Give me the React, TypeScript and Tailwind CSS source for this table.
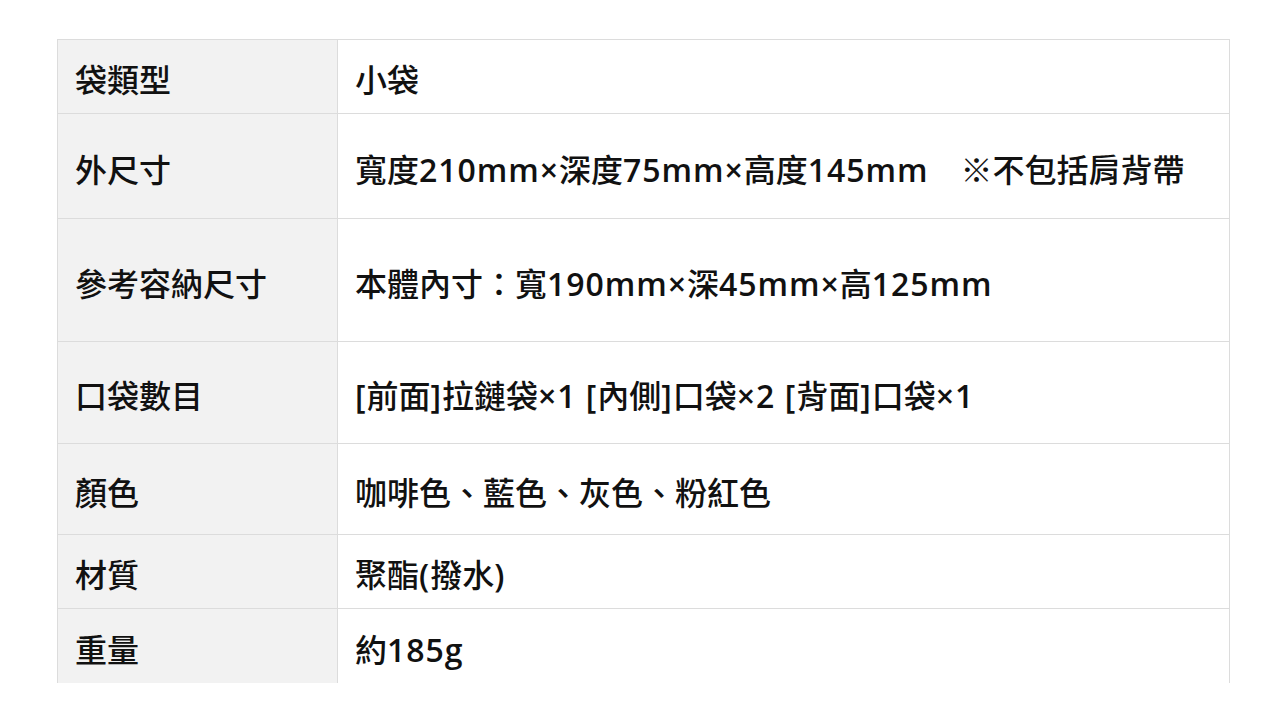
import React from 'react';

const rows: { label: string; value: string; h: string }[] = [
  { label: '袋類型', value: '小袋', h: 'h-[74px]' },
  { label: '外尺寸', value: '寬度210mm×深度75mm×高度145mm　※不包括肩背帶', h: 'h-[105px]' },
  { label: '參考容納尺寸', value: '本體內寸：寬190mm×深45mm×高125mm', h: 'h-[123px]' },
  { label: '口袋數目', value: '[前面]拉鏈袋×1 [內側]口袋×2 [背面]口袋×1', h: 'h-[102px]' },
  { label: '顏色', value: '咖啡色、藍色、灰色、粉紅色', h: 'h-[91px]' },
  { label: '材質', value: '聚酯(撥水)', h: 'h-[74px]' },
  { label: '重量', value: '約185g', h: 'h-[75px]' },
];

// latin runs are set a little looser and heavier than the CJK glyphs
const Mixed = ({ text }: { text: string }) => (
  <>
    {text.split(/([\x20-\x7e×]+)/).map((part, i) =>
      /^[\x20-\x7e×]+$/.test(part) ? (
        <span key={i} className="font-semibold tracking-[0.03em]">{part}</span>
      ) : (
        <span key={i}>{part}</span>
      )
    )}
  </>
);

export default function App() {
  return (
    <div
      className="w-[1280px] h-[720px] bg-white pt-[39px] pl-[57px] overflow-hidden"
      style={{ fontFamily: '"Open Sans", "Noto Sans CJK TC", sans-serif' }}
    >
      <div className="w-[1173px] border-x border-[#dcdcdc]">
        {rows.map((r) => (
          <div key={r.label} className={`flex border-t border-[#dcdcdc] ${r.h}`}>
            <div className="w-[280px] shrink-0 bg-[#f2f2f2] border-r border-[#dcdcdc] flex items-center pl-[17px] pt-[7px] text-[32px] font-medium text-[#111]">
              {r.label}
            </div>
            <div className="flex-1 flex items-center pl-[17px] pt-[7px] text-[32px] font-medium text-[#111] whitespace-pre">
              <Mixed text={r.value} />
            </div>
          </div>
        ))}
      </div>
    </div>
  );
}
